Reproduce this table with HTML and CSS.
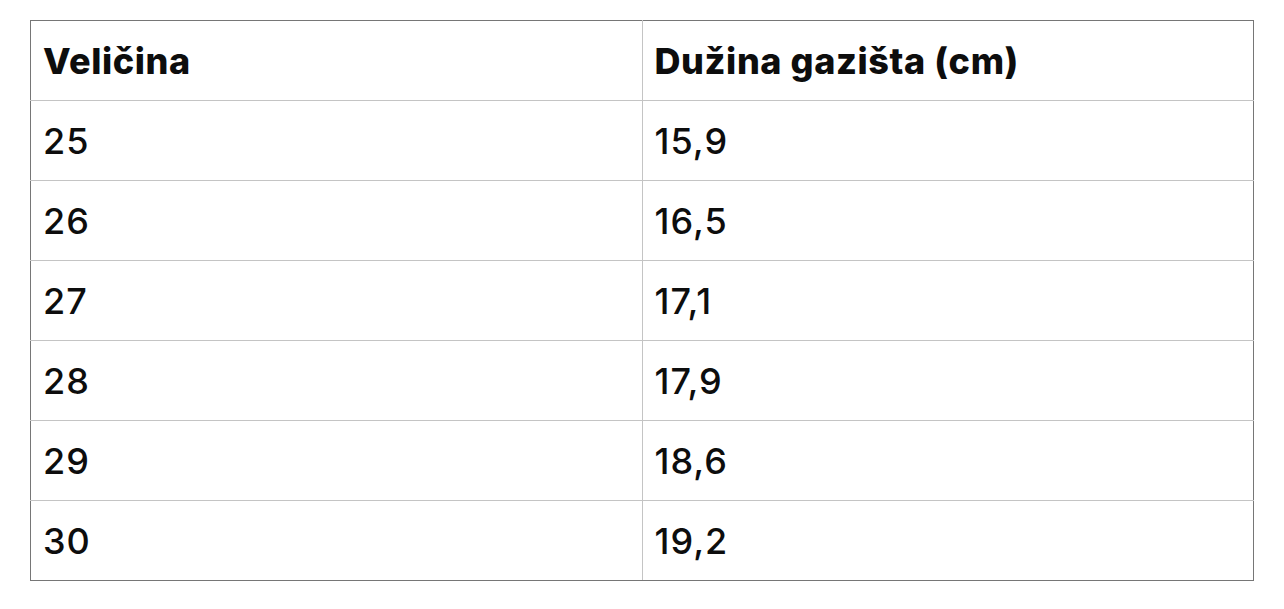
FILE: index.html
```html
<!DOCTYPE html>
<html lang="sr">
<head>
<meta charset="utf-8">
<title>Tabela veličina</title>
<link rel="stylesheet" href="styles.css">
</head>
<body>
<div class="wrap">
<table class="sizes">
<thead>
<tr><th>Veličina</th><th>Dužina gazišta (cm)</th></tr>
</thead>
<tbody>
<tr><td>25</td><td>15,9</td></tr>
<tr><td>26</td><td>16,5</td></tr>
<tr><td>27</td><td>17,1</td></tr>
<tr><td>28</td><td>17,9</td></tr>
<tr><td>29</td><td>18,6</td></tr>
<tr><td>30</td><td>19,2</td></tr>
</tbody>
</table>
</div>
</body>
</html>
```

FILE: styles.css
```css
html, body {
  margin: 0;
  padding: 0;
  background: #ffffff;
}
.wrap {
  padding: 20px 30px;
}
.sizes {
  width: 1224px;
  border-collapse: collapse;
  table-layout: fixed;
  border: 1.5px solid #767676;
  font-family: Inter, "Liberation Sans", sans-serif;
  color: #0d0d0d;
}
.sizes th,
.sizes td {
  height: 79px;
  padding: 0 12px;
  text-align: left;
  vertical-align: middle;
  border: 1.5px solid #c4c4c4;
  font-size: 36px;
  line-height: 1;
}
.sizes th {
  font-weight: 800;
  letter-spacing: 0.6px;
}
.sizes td {
  font-weight: 500;
  letter-spacing: 1px;
}
.sizes tr:first-child th {
  border-top-color: #767676;
}
.sizes th:first-child,
.sizes td:first-child {
  border-left-color: #767676;
}
.sizes th:last-child,
.sizes td:last-child {
  border-right-color: #767676;
}
.sizes tbody tr:last-child td {
  border-bottom-color: #767676;
}
```
